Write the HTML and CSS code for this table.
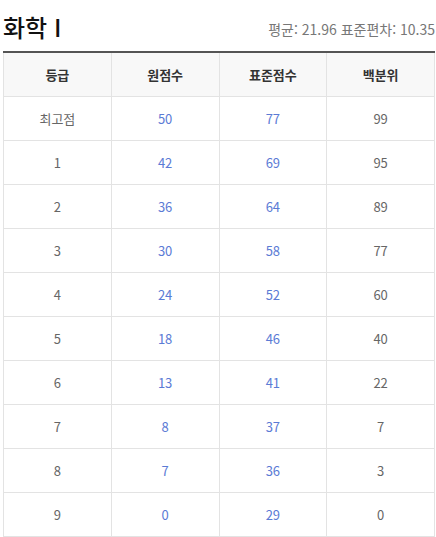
FILE: index.html
```html
<!DOCTYPE html>
<html lang="ko">
<head>
<meta charset="utf-8">
<link rel="stylesheet" href="styles.css">
</head>
<body>
<div class="wrap">
  <div class="head">
    <h2 class="title">화학 I</h2>
    <div class="stats">평균: 21.96 표준편차: 10.35</div>
  </div>
  <table class="grade">
    <thead>
      <tr><th>등급</th><th>원점수</th><th>표준점수</th><th>백분위</th></tr>
    </thead>
    <tbody>
      <tr><td>최고점</td><td class="b">50</td><td class="b">77</td><td>99</td></tr>
      <tr><td>1</td><td class="b">42</td><td class="b">69</td><td>95</td></tr>
      <tr><td>2</td><td class="b">36</td><td class="b">64</td><td>89</td></tr>
      <tr><td>3</td><td class="b">30</td><td class="b">58</td><td>77</td></tr>
      <tr><td>4</td><td class="b">24</td><td class="b">52</td><td>60</td></tr>
      <tr><td>5</td><td class="b">18</td><td class="b">46</td><td>40</td></tr>
      <tr><td>6</td><td class="b">13</td><td class="b">41</td><td>22</td></tr>
      <tr><td>7</td><td class="b">8</td><td class="b">37</td><td>7</td></tr>
      <tr><td>8</td><td class="b">7</td><td class="b">36</td><td>3</td></tr>
      <tr><td>9</td><td class="b">0</td><td class="b">29</td><td>0</td></tr>
    </tbody>
  </table>
</div>
</body>
</html>
```
FILE: styles.css
```css
html, body { margin: 0; padding: 0; background: #fff; }
body { font-family: "Noto Sans CJK KR", "Noto Sans", sans-serif; color: #333; }
.wrap { padding: 0 1px 0 3px; }
.head { display: flex; justify-content: space-between; align-items: flex-end; height: 44px; margin-bottom: 7px; }
.title { margin: 0; font-size: 24px; font-weight: 500; line-height: 34px; color: #111; }
.stats { font-size: 14px; color: #777; line-height: 20px; padding-bottom: 5px; }
.grade { width: 100%; border-collapse: collapse; table-layout: fixed; border-top: 2px solid #555; }
.grade th, .grade td { border: 1px solid #e3e3e3; text-align: center; height: 43px; padding: 0; font-size: 13px; }
.grade th { background: #f8f8f8; font-weight: 700; color: #333; }
.grade td { color: #666; }
.grade td.b { color: #5b7bd5; }
```
